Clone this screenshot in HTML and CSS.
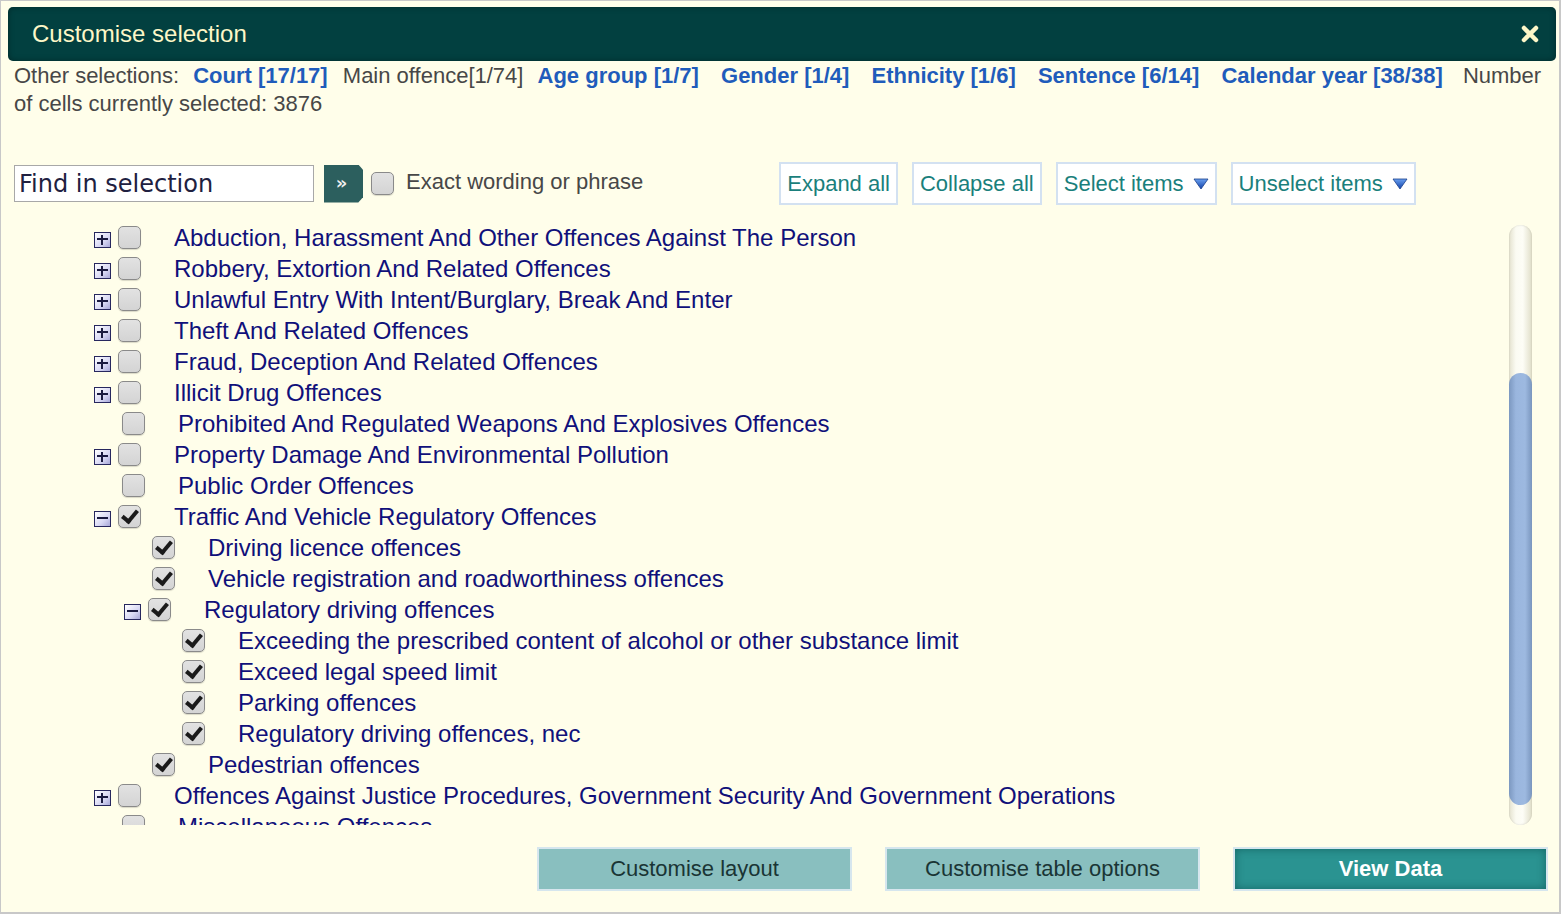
FILE: index.html
```html
<!DOCTYPE html>
<html>
<head>
<meta charset="utf-8">
<link rel="stylesheet" href="styles.css">
</head>
<body>
<div class="dialog">
  <div class="header">
    <span class="title">Customise selection</span>
    <svg class="close" width="20" height="20" viewBox="0 0 20 20"><path d="M4 4 L16 16 M16 4 L4 16" stroke="#fdf7c8" stroke-width="4.5" stroke-linecap="round"/></svg>
  </div>
  <div class="selections">
    <span class="lbl">Other selections:</span>
    <a class="sel first">Court [17/17]</a>
    <span class="plain">Main offence[1/74]</span>
    <a class="sel">Age group [1/7]</a>
    <a class="sel">Gender [1/4]</a>
    <a class="sel">Ethnicity [1/6]</a>
    <a class="sel">Sentence [6/14]</a>
    <a class="sel last">Calendar year [38/38]</a>
    <span class="plain">Number of cells currently selected: 3876</span>
  </div>
  <div class="toolbar">
    <input class="find" type="text" placeholder="Find in selection">
    <button class="go">&raquo;</button>
    <span class="cb small"></span>
    <span class="exact">Exact wording or phrase</span>
    <div class="tbtns">
      <button class="tbtn">Expand all</button>
      <button class="tbtn">Collapse all</button>
      <button class="tbtn">Select items <svg class="tri" width="16" height="12" viewBox="0 0 16 12"><defs><linearGradient id="tg" x1="0" y1="0" x2="0" y2="1"><stop offset="0" stop-color="#6aa0f0"/><stop offset="1" stop-color="#1040a8"/></linearGradient></defs><path d="M1 1 H15 L8 11 Z" fill="url(#tg)" stroke="#1a3f8a" stroke-width="0.8"/></svg></button>
      <button class="tbtn">Unselect items <svg class="tri" width="16" height="12" viewBox="0 0 16 12"><path d="M1 1 H15 L8 11 Z" fill="url(#tg)" stroke="#1a3f8a" stroke-width="0.8"/></svg></button>
    </div>
  </div>
  <div class="treewrap">
    <div class="tree">
      <div class="row l0"><span class="exp plus"></span><span class="cb"></span><span class="txt">Abduction, Harassment And Other Offences Against The Person</span></div>
      <div class="row l0"><span class="exp plus"></span><span class="cb"></span><span class="txt">Robbery, Extortion And Related Offences</span></div>
      <div class="row l0"><span class="exp plus"></span><span class="cb"></span><span class="txt">Unlawful Entry With Intent/Burglary, Break And Enter</span></div>
      <div class="row l0"><span class="exp plus"></span><span class="cb"></span><span class="txt">Theft And Related Offences</span></div>
      <div class="row l0"><span class="exp plus"></span><span class="cb"></span><span class="txt">Fraud, Deception And Related Offences</span></div>
      <div class="row l0"><span class="exp plus"></span><span class="cb"></span><span class="txt">Illicit Drug Offences</span></div>
      <div class="row l0"><span class="noexp"></span><span class="cb"></span><span class="txt">Prohibited And Regulated Weapons And Explosives Offences</span></div>
      <div class="row l0"><span class="exp plus"></span><span class="cb"></span><span class="txt">Property Damage And Environmental Pollution</span></div>
      <div class="row l0"><span class="noexp"></span><span class="cb"></span><span class="txt">Public Order Offences</span></div>
      <div class="row l0"><span class="exp minus"></span><span class="cb on"></span><span class="txt">Traffic And Vehicle Regulatory Offences</span></div>
      <div class="row l1"><span class="noexp"></span><span class="cb on"></span><span class="txt">Driving licence offences</span></div>
      <div class="row l1"><span class="noexp"></span><span class="cb on"></span><span class="txt">Vehicle registration and roadworthiness offences</span></div>
      <div class="row l1"><span class="exp minus"></span><span class="cb on"></span><span class="txt">Regulatory driving offences</span></div>
      <div class="row l2"><span class="noexp"></span><span class="cb on"></span><span class="txt">Exceeding the prescribed content of alcohol or other substance limit</span></div>
      <div class="row l2"><span class="noexp"></span><span class="cb on"></span><span class="txt">Exceed legal speed limit</span></div>
      <div class="row l2"><span class="noexp"></span><span class="cb on"></span><span class="txt">Parking offences</span></div>
      <div class="row l2"><span class="noexp"></span><span class="cb on"></span><span class="txt">Regulatory driving offences, nec</span></div>
      <div class="row l1"><span class="noexp"></span><span class="cb on"></span><span class="txt">Pedestrian offences</span></div>
      <div class="row l0"><span class="exp plus"></span><span class="cb"></span><span class="txt">Offences Against Justice Procedures, Government Security And Government Operations</span></div>
      <div class="row l0"><span class="noexp"></span><span class="cb"></span><span class="txt">Miscellaneous Offences</span></div>
    </div>
    <div class="scroll"><div class="thumb"></div></div>
  </div>
  <div class="actions">
    <button class="act">Customise layout</button>
    <button class="act">Customise table options</button>
    <button class="act primary">View Data</button>
  </div>
</div>
</body>
</html>
```

FILE: styles.css
```css
html, body {
  margin: 0;
  padding: 0;
  background: #ffffff;
}
body {
  font-family: "Liberation Sans", Arial, sans-serif;
}
.dialog {
  box-sizing: border-box;
  width: 1561px;
  height: 914px;
  border: 1px solid #c8c8c8;
  border-right-width: 2px;
  border-bottom-width: 2px;
  background: #fffeea;
  padding: 6px 3px 0 7px;
  display: flex;
  flex-direction: column;
}
.header {
  height: 54px;
  flex: none;
  background: #024040;
  border-radius: 5px;
  display: flex;
  align-items: center;
  justify-content: space-between;
  padding: 0 16px 0 24px;
  box-shadow: inset 0 0 6px rgba(0,0,0,0.35);
}
.title {
  color: #fdf7c8;
  font-size: 24px;
}
.close {
  display: block;
}
.selections {
  font-size: 22px;
  line-height: 28px;
  color: #474747;
  padding: 0 2px 0 6px;
  margin-top: 1px;
}
.selections .lbl { margin-right: 8px; }
.selections .sel {
  color: #1f5cbb;
  font-weight: bold;
  margin-right: 16px;
}
.selections .sel.first { margin-right: 9px; }
.selections .sel.last { margin-right: 14px; }
.selections .plain { margin-right: 8px; }
.toolbar {
  display: flex;
  align-items: center;
  margin-top: 44px;
  padding-left: 6px;
  height: 43px;
}
.find {
  box-sizing: border-box;
  width: 300px;
  height: 37px;
  border: 1px solid #a8a8a8;
  background: #fff;
  font-family: "DejaVu Sans", sans-serif;
  font-size: 24px;
  padding: 0 4px;
  color: #202040;
}
.find::placeholder { color: #202040; opacity: 1; }
.go {
  width: 39px;
  height: 38px;
  margin-left: 10px;
  border: none;
  background: #2c5f5e;
  color: #f0f0f0;
  font-weight: bold;
  font-size: 18px;
  padding: 0 4px 2px 0;
  clip-path: polygon(0 0, 88% 0, 100% 14%, 100% 86%, 88% 100%, 0 100%);
  font-family: "DejaVu Sans", sans-serif;
}
.cb {
  box-sizing: border-box;
  width: 23px;
  height: 23px;
  border: 1.5px solid #8a8a8a;
  border-radius: 5px;
  background: linear-gradient(#e2e2e2, #d4d4d4);
  box-shadow: 0 1px 1px rgba(0,0,0,0.15);
  flex: none;
  position: relative;
}
.cb.small { margin-left: 8px; }
.cb.on::after {
  content: "";
  position: absolute;
  left: 6px;
  top: 1px;
  width: 6px;
  height: 12px;
  border-right: 4px solid #1a1a1a;
  border-bottom: 4px solid #1a1a1a;
  transform: rotate(40deg);
}
.exact {
  margin-left: 12px;
  font-size: 22px;
  color: #474747;
  margin-top: -4px;
}
.tbtns {
  display: flex;
  gap: 14px;
  margin-left: 136px;
  height: 43px;
}
.tbtn {
  box-sizing: border-box;
  height: 43px;
  border: 2px solid #d3e1f1;
  background: #ffffff;
  color: #1a7f7c;
  font-family: "Liberation Sans", Arial, sans-serif;
  font-size: 22px;
  padding: 0 6px;
  display: flex;
  align-items: center;
  gap: 9px;
}
.tri { display: block; }
.treewrap {
  display: flex;
  margin-top: 17px;
  height: 603px;
  flex: none;
}
.tree {
  flex: 1;
  overflow: hidden;
  padding-left: 86px;
}
.row {
  display: flex;
  align-items: center;
  height: 31px;
}
.l1 { padding-left: 30px; }
.l2 { padding-left: 60px; }
.exp {
  box-sizing: border-box;
  width: 17px;
  height: 16px;
  margin-right: 7px;
  margin-top: 4px;
  border: 1.5px solid #27275e;
  background: linear-gradient(135deg, #ffffff 0%, #d8d8f4 60%, #a8a8d8 100%);
  position: relative;
  flex: none;
}
.exp::before {
  content: "";
  position: absolute;
  left: 2px;
  right: 2px;
  top: 5.5px;
  height: 2px;
  background: #1a1a40;
}
.exp.plus::after {
  content: "";
  position: absolute;
  top: 2px;
  bottom: 2px;
  left: 5.5px;
  width: 2px;
  background: #1a1a40;
}
.noexp {
  width: 28px;
  flex: none;
}
.txt {
  margin-left: 33px;
  font-size: 24px;
  color: #10107a;
  white-space: nowrap;
}
.scroll {
  width: 23px;
  margin: 3px 24px 0 0;
  border-radius: 12px;
  background: linear-gradient(90deg, #e4e2cf 0%, #fbfbf2 30%, #fdfdf6 60%, #e0dec8 100%);
  box-shadow: inset 0 0 2px rgba(0,0,0,0.15);
  display: flex;
  flex-direction: column;
  justify-content: flex-end;
  padding-bottom: 20px;
  box-sizing: border-box;
}
.thumb {
  height: 432px;
  border-radius: 12px;
  background: linear-gradient(90deg, #7c98c0 0%, #9ab6de 30%, #9db9e0 70%, #7a96be 100%);
}
.actions {
  display: flex;
  justify-content: flex-end;
  gap: 33px;
  margin-top: 22px;
  padding-right: 8px;
}
.act {
  box-sizing: border-box;
  width: 315px;
  height: 44px;
  border: 2px solid #d6e6ee;
  background: #89bfbf;
  color: #1a3535;
  font-family: "Liberation Sans", Arial, sans-serif;
  font-size: 22px;
}
.act.primary {
  background: #2a9391;
  color: #ffffff;
  font-weight: bold;
  box-shadow: inset 0 0 8px rgba(0,60,60,0.5);
}
```
